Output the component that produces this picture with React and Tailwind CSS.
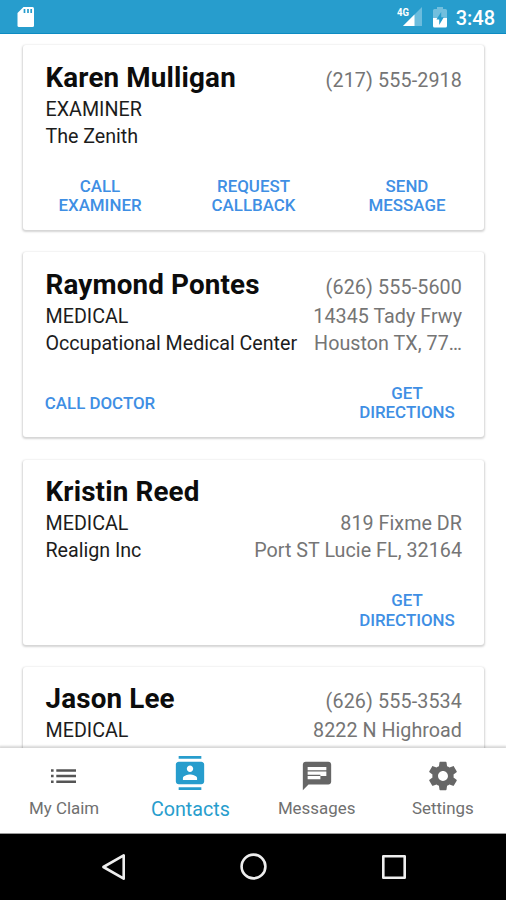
import React from 'react';

const contacts = [
  {
    name: 'Karen Mulligan', role: 'EXAMINER', org: 'The Zenith',
    right: ['(217) 555-2918', '', ''],
    actions: [['CALL', 'EXAMINER'], ['REQUEST', 'CALLBACK'], ['SEND', 'MESSAGE']],
  },
  {
    name: 'Raymond Pontes', role: 'MEDICAL', org: 'Occupational Medical Center',
    right: ['(626) 555-5600', '14345 Tady Frwy', 'Houston TX, 77…'],
    actions: [['CALL DOCTOR'], ['GET', 'DIRECTIONS']],
  },
  {
    name: 'Kristin Reed', role: 'MEDICAL', org: 'Realign Inc',
    right: ['', '819 Fixme DR', 'Port ST Lucie FL, 32164'],
    actions: [['GET', 'DIRECTIONS']],
  },
  {
    name: 'Jason Lee', role: 'MEDICAL', org: '',
    right: ['(626) 555-3534', '8222 N Highroad', ''],
    actions: [],
  },
];

function Card({ c }) {
  return (
    <div className="h-[185px] shrink-0 rounded-[3px] bg-white px-[22px] pt-[15.5px] shadow-[0_1px_2px_1px_rgba(0,0,0,0.17)]">
      <div className="mb-px flex h-[34px] items-baseline justify-between whitespace-nowrap pl-[0.5px] leading-[34px]">
        <span className="text-[27.8px] font-bold tracking-[0.15px] text-[#0c0c0c]">{c.name}</span>
        <span className="text-[19.7px] tracking-[0.13px] text-[#757575]">{c.right[0]}</span>
      </div>
      <div className="flex h-[27px] justify-between whitespace-nowrap pl-[0.5px] text-[19.7px] leading-[27px]">
        <span className="text-[#1c1c1c]">{c.role}</span>
        <span className="tracking-[0.04px] text-[#757575]">{c.right[1]}</span>
      </div>
      <div className="flex h-[27px] justify-between whitespace-nowrap pl-[0.5px] text-[19.7px] leading-[27px]">
        <span className="tracking-[-0.03px] text-[#1c1c1c]">{c.org}</span>
        <span className="tracking-[0.04px] text-[#757575]">{c.right[2]}</span>
      </div>
      <div className={'mt-[27px] flex h-[39px] items-center ' + (c.actions.length === 1 ? 'justify-end' : 'justify-between')}>
        {c.actions.map((lines) => (
          <button key={lines.join(' ')} className="flex w-[110px] flex-col items-center whitespace-nowrap text-[16.9px] font-medium leading-[19.5px] text-[#3f8fe4]">
            {lines.map((l) => <span key={l}>{l}</span>)}
          </button>
        ))}
      </div>
    </div>
  );
}

export default function App() {
  return (
    <div className="flex h-[900px] w-[506px] flex-col overflow-hidden bg-white font-['Roboto',sans-serif]">
      <header className="flex h-[34px] shrink-0 items-center justify-between border-b border-[#0d8bc2] bg-[#279dcd] pl-[17px] pr-[11px] text-white">
        <svg width="18" height="22" viewBox="0 0 18 22" className="mt-[1px]">
          <path d="M6.5 1H15.5Q17 1 17 2.5V19.5Q17 21 15.5 21H2Q.5 21 .5 19.5V7Z" fill="#fff" />
          <path d="M7.5 3v4M11 3v4M14.2 3v4" stroke="#279dcd" strokeWidth="1.7" />
        </svg>
        <div className="flex items-center">
          <svg width="28" height="22" viewBox="0 0 28 22" className="mt-[1px]">
            <path d="M25 1V20H6Z" fill="#fff" fillOpacity=".32" />
            <path d="M17.5 8.5V20H6Z" fill="#fff" />
            <text x="0" y="9.5" fontSize="11.5" fontWeight="700" fill="#fff" textLength="12" lengthAdjust="spacingAndGlyphs">4G</text>
          </svg>
          <svg width="14" height="22" viewBox="0 0 14 22" className="ml-[8px] mt-[2px]">
            <path d="M0 3.5Q0 2 1.5 2H4V0H10V2H12.5Q14 2 14 3.5V11H0Z" fill="#fff" fillOpacity=".35" />
            <path d="M0 11H14V19Q14 20.5 12.5 20.5H1.5Q0 20.5 0 19Z" fill="#fff" />
            <path d="M8.2 5L3.4 12.5H6.2V18L10.8 10.3H8.2Z" fill="#279dcd" />
          </svg>
          <span className="ml-[9px] mt-[2px] text-[20px] font-medium leading-6">3:48</span>
        </div>
      </header>
      <main className="flex min-h-0 flex-1 flex-col gap-[22.3px] overflow-hidden pl-[23px] pr-[22px] pt-[11px]">
        {contacts.map((c) => <Card key={c.name} c={c} />)}
      </main>
      <nav className="z-10 flex h-[86px] shrink-0 border-b border-[#9a9a9a] bg-white pl-[1px] text-[16.9px] leading-5 text-[#707070] shadow-[0_-1px_2px_1px_rgba(0,0,0,0.16)]">
        <div className="flex flex-1 flex-col items-center pt-[11px]">
          <svg width="34" height="34" viewBox="0 0 34 34" className="mb-[5px]">
            <path d="M4 11.5h2.6M4 17h2.6M4 22.7h2.6M9.3 11.5H29M9.3 17H29M9.3 22.7H29" stroke="#555" strokeWidth="2.4" />
          </svg>
          <span>My Claim</span>
        </div>
        <div className="flex flex-1 flex-col items-center pt-[8px] text-[#279dcd]">
          <svg width="34" height="34" viewBox="0 0 24 24" className="mb-[10px]" fill="currentColor">
            <path d="M20 0H4v2h16V0zM4 24h16v-2H4v2zM20 4H4c-1.1 0-2 .9-2 2v12c0 1.1.9 2 2 2h16c1.1 0 2-.9 2-2V6c0-1.1-.9-2-2-2zm-8 2.75c1.24 0 2.25 1.01 2.25 2.25s-1.01 2.25-2.25 2.25S9.75 10.24 9.75 9 10.76 6.75 12 6.75zM17 17H7v-1.5c0-1.67 3.33-2.5 5-2.5s5 .83 5 2.5V17z" />
          </svg>
          <span className="text-[19.7px]">Contacts</span>
        </div>
        <div className="flex flex-1 flex-col items-center pt-[11px]">
          <svg width="34" height="34" viewBox="0 0 24 24" className="mb-[5px]">
            <path d="M20 2H4c-1.1 0-1.99.9-1.99 2L2 22l4-4h14c1.1 0 2-.9 2-2V4c0-1.1-.9-2-2-2z" fill="#666" />
            <path d="M5.4 5.6H18.6V8H5.4zM5.4 8.9H18.6V11.2H5.4zM5.4 12H14.4V14.3H5.4zM14.4 11.2H18.6V12H14.4z" fill="#fff" />
          </svg>
          <span>Messages</span>
        </div>
        <div className="flex flex-1 flex-col items-center pt-[11px]">
          <svg width="34" height="34" viewBox="0 0 24 24" className="mb-[5px]" fill="#666">
            <path d="M19.43 12.98c.04-.32.07-.64.07-.98s-.03-.66-.07-.98l2.11-1.65c.19-.15.24-.42.12-.64l-2-3.46c-.12-.22-.39-.3-.61-.22l-2.49 1c-.52-.4-1.08-.73-1.69-.98l-.38-2.65C14.46 2.18 14.25 2 14 2h-4c-.25 0-.46.18-.49.42l-.38 2.65c-.61.25-1.17.59-1.69.98l-2.49-1c-.23-.09-.49 0-.61.22l-2 3.46c-.13.22-.07.49.12.64l2.11 1.65c-.04.32-.07.65-.07.98s.03.66.07.98l-2.11 1.65c-.19.15-.24.42-.12.64l2 3.46c.12.22.39.3.61.22l2.49-1c.52.4 1.08.73 1.69.98l.38 2.65c.03.24.24.42.49.42h4c.25 0 .46-.18.49-.42l.38-2.65c.61-.25 1.17-.59 1.69-.98l2.49 1c.23.09.49 0 .61-.22l2-3.46c.12-.22.07-.49-.12-.64l-2.11-1.65zM12 15.5c-1.93 0-3.5-1.57-3.5-3.5s1.57-3.5 3.5-3.5 3.5 1.57 3.5 3.5-1.57 3.5-3.5 3.5z" />
          </svg>
          <span>Settings</span>
        </div>
      </nav>
      <footer className="z-10 flex h-[66px] shrink-0 items-center justify-between bg-black pl-[100px] pr-[99px]">
        <svg width="27" height="30" viewBox="0 0 27 30" fill="none" stroke="#eee" strokeWidth="2.6" strokeLinejoin="round"><path d="M23.7 3.3V26.7L3.4 15Z" /></svg>
        <svg width="28" height="28" viewBox="0 0 28 28" fill="none" stroke="#eee" strokeWidth="2.6"><circle cx="13.5" cy="13.5" r="11.9" /></svg>
        <svg width="26" height="26" viewBox="0 0 26 26" fill="none" stroke="#eee" strokeWidth="2.6" strokeLinejoin="round"><path d="M2.3 2.3H23.7V23.7H2.3Z" /></svg>
      </footer>
    </div>
  );
}
